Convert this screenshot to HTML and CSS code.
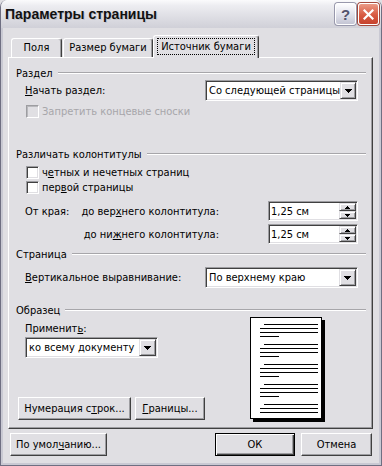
FILE: index.html
```html
<!DOCTYPE html>
<html lang="ru">
<head>
  <meta charset="UTF-8">
  <title>Параметры страницы</title>
  <link rel="stylesheet" href="styles.css">
</head>
<body>
  <div class="window">
    <div class="titlebar">
      <span class="title">Параметры страницы</span>
      <span class="cap-btn help">?</span>
      <span class="cap-btn close">
        <svg width="11" height="11" viewBox="0 0 11 11"><path d="M1.5 1.5 L9.5 9.5 M9.5 1.5 L1.5 9.5" stroke="#fff" stroke-width="2.2" stroke-linecap="square"/></svg>
      </span>
    </div>

    <div class="client">
      <div class="tabs">
        <div class="tab tab-fields">Поля</div>
        <div class="tab tab-size">Размер бумаги</div>
        <div class="tab tab-source active"><span class="focus">Источник бумаги</span></div>
      </div>

      <div class="panel">
        <div class="group-title">Раздел</div>
        <div class="row row-start">
          <span class="lbl"><u>Н</u>ачать раздел:</span>
          <div class="combo combo-wide">
            <span class="combo-text">Со следующей страницы</span>
            <span class="drop-btn"><svg width="7" height="4" viewBox="0 0 7 4" shape-rendering="crispEdges"><path d="M0 0h7v1h-1v1h-1v1h-1v1h-1v-1h-1v-1h-1v-1h-1z"/></svg></span>
          </div>
        </div>
        <div class="check disabled row-suppress"><span class="box"></span>Запретить концевые сноски</div>

        <div class="group-title gt-headers">Различать колонтитулы</div>
        <div class="check row-even"><span class="box"></span>ч<u>е</u>тных и нечетных страниц</div>
        <div class="check row-first"><span class="box"></span>пер<u>в</u>ой страницы</div>

        <div class="row spin-row spin-top">
          <span class="edge">От края:</span>
          <span class="spin-lbl">до вер<u>х</u>него колонтитула:</span>
          <div class="spin">
            <span class="spin-text">1,25 см</span>
            <span class="spin-btns">
              <span class="spin-btn"><svg width="5" height="3" viewBox="0 0 5 3" shape-rendering="crispEdges"><path d="M2 0h1v1h1v1h1v1h-5v-1h1v-1h1z"/></svg></span>
              <span class="spin-btn"><svg width="5" height="3" viewBox="0 0 5 3" shape-rendering="crispEdges"><path d="M0 0h5v1h-1v1h-1v1h-1v-1h-1v-1h-1z"/></svg></span>
            </span>
          </div>
        </div>
        <div class="row spin-row spin-bottom">
          <span class="edge"></span>
          <span class="spin-lbl">до ни<u>ж</u>него колонтитула:</span>
          <div class="spin">
            <span class="spin-text">1,25 см</span>
            <span class="spin-btns">
              <span class="spin-btn"><svg width="5" height="3" viewBox="0 0 5 3" shape-rendering="crispEdges"><path d="M2 0h1v1h1v1h1v1h-5v-1h1v-1h1z"/></svg></span>
              <span class="spin-btn"><svg width="5" height="3" viewBox="0 0 5 3" shape-rendering="crispEdges"><path d="M0 0h5v1h-1v1h-1v1h-1v-1h-1v-1h-1z"/></svg></span>
            </span>
          </div>
        </div>

        <div class="group-title gt-page">Страница</div>
        <div class="row row-valign">
          <span class="lbl"><u>В</u>ертикальное выравнивание:</span>
          <div class="combo combo-wide">
            <span class="combo-text">По верхнему краю</span>
            <span class="drop-btn"><svg width="7" height="4" viewBox="0 0 7 4" shape-rendering="crispEdges"><path d="M0 0h7v1h-1v1h-1v1h-1v1h-1v-1h-1v-1h-1v-1h-1z"/></svg></span>
          </div>
        </div>

        <div class="group-title gt-sample">Образец</div>
        <div class="sample">
          <div class="sample-left">
            <div class="lbl apply-lbl">Применит<u>ь</u>:</div>
            <div class="combo combo-apply">
              <span class="combo-text">ко всему документу</span>
              <span class="drop-btn"><svg width="7" height="4" viewBox="0 0 7 4" shape-rendering="crispEdges"><path d="M0 0h7v1h-1v1h-1v1h-1v1h-1v-1h-1v-1h-1v-1h-1z"/></svg></span>
            </div>
            <div class="panel-buttons">
              <span class="btn btn-lines">Нумерация с<u>т</u>рок...</span>
              <span class="btn btn-borders"><u>Г</u>раницы...</span>
            </div>
          </div>
          <svg class="paper" width="75" height="105" viewBox="0 0 75 105" shape-rendering="crispEdges">
            <rect x="3" y="3" width="72" height="102" fill="#000"/>
            <rect x="0.5" y="0.5" width="71" height="101" fill="#fff" stroke="#000"/>
            <g fill="#000">
              <rect x="14" y="7" width="54" height="1"/>
              <rect x="10" y="11" width="58" height="1"/>
              <rect x="10" y="15" width="58" height="1"/>
              <rect x="10" y="19" width="19" height="1"/>
              <rect x="14" y="27" width="54" height="1"/>
              <rect x="10" y="31" width="58" height="1"/>
              <rect x="10" y="35" width="58" height="1"/>
              <rect x="10" y="39" width="19" height="1"/>
              <rect x="14" y="47" width="54" height="1"/>
              <rect x="10" y="51" width="58" height="1"/>
              <rect x="10" y="55" width="58" height="1"/>
              <rect x="10" y="59" width="19" height="1"/>
              <rect x="14" y="67" width="54" height="1"/>
              <rect x="10" y="71" width="58" height="1"/>
              <rect x="10" y="75" width="58" height="1"/>
              <rect x="10" y="79" width="19" height="1"/>
              <rect x="14" y="87" width="54" height="1"/>
              <rect x="10" y="91" width="58" height="1"/>
              <rect x="10" y="95" width="58" height="1"/>
            </g>
          </svg>
        </div>
      </div>

      <div class="dialog-buttons">
        <span class="btn btn-default-set">По умол<u>ч</u>анию...</span>
        <span class="btn btn-ok">ОК</span>
        <span class="btn btn-cancel">Отмена</span>
      </div>
    </div>
  </div>
</body>
</html>
```

FILE: styles.css
```css
* {
  box-sizing: border-box;
}

body {
  margin: 0;
  font-family: "DejaVu Sans Condensed", "Liberation Sans", sans-serif;
  font-size: 11px;
  line-height: 13px;
  color: #000;
  background: #e0dfe3;
}

u {
  text-decoration: underline;
  text-underline-offset: 1px;
}

.window {
  width: 382px;
  height: 466px;
  display: flex;
  flex-direction: column;
  background: #e0dfe3;
  border: 1px solid #6f6f82;
  border-top: none;
  border-radius: 7px 7px 0 0;
  overflow: hidden;
}

/* title bar */
.titlebar {
  height: 28px;
  display: flex;
  align-items: center;
  padding: 0 2px 0 4px;
  background: linear-gradient(180deg, #fbfbfc 0%, #ededf1 20%, #dedee4 60%, #d0d0d8 100%);
}

.title {
  flex: 1;
  font-family: "Liberation Sans", sans-serif;
  font-weight: bold;
  font-size: 14px;
  color: #111;
  text-shadow: 1px 1px 0 #c4c4cc;
}

.cap-btn {
  width: 21px;
  height: 22px;
  display: flex;
  align-items: center;
  justify-content: center;
  border: 1px solid #fff;
  border-radius: 3px;
  box-shadow: 0 0 0 1px #9898ac;
}

.help {
  margin-right: 2px;
  background: linear-gradient(180deg, #fdfdff, #dcdde8 60%, #c4c5d4);
  font-family: "Liberation Sans", sans-serif;
  font-weight: bold;
  font-size: 15px;
  color: #53536c;
}

.close {
  background: linear-gradient(180deg, #eb9b87, #d85a42 55%, #c6432e);
  box-shadow: 0 0 0 1px #a24a3e;
}

/* client area */
.client {
  flex: 1;
  display: flex;
  flex-direction: column;
  padding: 7px 6px 0 5px;
  border: 2px solid #c9c9d3;
  border-top: none;
}

.tabs {
  height: 22px;
  display: flex;
  align-items: flex-end;
  padding-left: 3px;
}

.tab {
  height: 19px;
  padding-top: 2px;
  text-align: center;
  background: #e0dfe3;
  border-top: 1px solid #fff;
  border-left: 1px solid #fff;
  border-right: 1px solid #404040;
  border-radius: 3px 3px 0 0;
  box-shadow: inset -1px 0 #9d9da1;
}

.tab-fields {
  width: 51px;
  margin-right: 1px;
}

.tab-size {
  width: 90px;
}

.tab.active {
  width: 106px;
  height: 23px;
  padding-top: 4px;
  margin-bottom: -1px;
  position: relative;
  z-index: 1;
}

.focus {
  padding: 1px 3px;
  outline: 1px dotted #000;
}

.panel {
  height: 372px;
  padding: 8px 6px 0 7px;
  border: 1px solid;
  border-color: #fff #404040 #404040 #fff;
  box-shadow: inset -1px -1px #9d9da1;
}

.group-title {
  height: 14px;
  display: flex;
  align-items: center;
  gap: 5px;
}

.group-title::after {
  content: "";
  flex: 1;
  border-top: 1px solid #a7a6aa;
  border-bottom: 1px solid #fff;
}

.row {
  display: flex;
  align-items: center;
  padding-left: 9px;
}

.row-start,
.row-valign {
  height: 21px;
}

.combo {
  height: 21px;
  display: flex;
  align-items: center;
  background: #fff;
  border: 1px solid;
  border-color: #9d9da1 #fff #fff #9d9da1;
  box-shadow: inset 1px 1px #404040, inset -1px -1px #e0dfe3;
  padding: 1px;
}

.combo-wide {
  width: 153px;
  margin-left: auto;
  margin-right: 8px;
}

.combo-text {
  flex: 1;
  padding-left: 2px;
  white-space: nowrap;
}

.drop-btn,
.spin-btn {
  display: flex;
  align-items: center;
  justify-content: center;
  background: #e0dfe3;
  border: 1px solid;
  border-color: #e0dfe3 #404040 #404040 #e0dfe3;
  box-shadow: inset 1px 1px #fff, inset -1px -1px #9d9da1;
}

.drop-btn {
  width: 17px;
  height: 17px;
}

/* checkboxes */
.check {
  height: 13px;
  display: flex;
  align-items: center;
  margin-left: 10px;
}

.box {
  width: 13px;
  height: 13px;
  margin-right: 3px;
  background: #fff;
  border: 1px solid;
  border-color: #9d9da1 #fff #fff #9d9da1;
  box-shadow: inset 1px 1px #404040, inset -1px -1px #e0dfe3;
}

.check.disabled {
  color: #a7a6aa;
}

.check.disabled .box {
  background: #e0dfe3;
  box-shadow: inset 1px 1px #b8b8bc, inset -1px -1px #e0dfe3;
}

.row-suppress {
  margin-top: 4px;
}

.gt-headers {
  margin-top: 29px;
}

.row-even {
  margin-top: 5px;
}

.row-first {
  margin-top: 2px;
}

/* spin rows */
.spin-row {
  height: 20px;
}

.spin-top {
  margin-top: 7px;
}

.spin-bottom {
  margin-top: 3px;
}

.edge {
  flex: 0 1 57px;
  white-space: nowrap;
}

.spin-lbl {
  flex: 1 0 auto;
  text-align: right;
  white-space: nowrap;
}

.spin {
  flex: none;
  width: 90px;
  height: 20px;
  margin-left: 49px;
  margin-right: 8px;
  display: flex;
  align-items: center;
  background: #fff;
  border: 1px solid;
  border-color: #9d9da1 #fff #fff #9d9da1;
  box-shadow: inset 1px 1px #404040, inset -1px -1px #e0dfe3;
  padding: 1px;
}

.spin-text {
  flex: 1;
  padding-left: 1px;
}

.spin-btns {
  width: 17px;
  height: 16px;
  display: flex;
  flex-direction: column;
}

.spin-btn {
  flex: 1;
}

.gt-page {
  margin-top: 3px;
}

.row-valign {
  margin-top: 6px;
}

.gt-sample {
  margin-top: 15px;
}

/* sample section */
.sample {
  display: flex;
}

.sample-left {
  width: 234px;
}

.apply-lbl {
  height: 14px;
  margin-top: 5px;
  margin-left: 9px;
}

.combo-apply {
  width: 133px;
  margin-top: 1px;
  margin-left: 9px;
}

.panel-buttons {
  display: flex;
  gap: 4px;
  margin-top: 39px;
  margin-left: 2px;
}

.btn {
  height: 23px;
  display: flex;
  align-items: center;
  justify-content: center;
  background: #e0dfe3;
  border: 1px solid;
  border-color: #fff #404040 #404040 #fff;
  box-shadow: inset -1px -1px #9d9da1;
}

.btn-lines {
  width: 113px;
}

.btn-borders {
  width: 70px;
}

.dialog-buttons {
  display: flex;
  margin-top: 4px;
  padding-left: 2px;
}

.btn-default-set {
  width: 97px;
  margin-right: auto;
}

.btn-ok {
  width: 80px;
  border: 1px solid #000;
  box-shadow: inset 1px 1px #fff, inset -1px -1px #404040, inset -2px -2px #9d9da1;
}

.btn-cancel {
  width: 71px;
  margin-left: 6px;
  margin-right: 1px;
}
```
